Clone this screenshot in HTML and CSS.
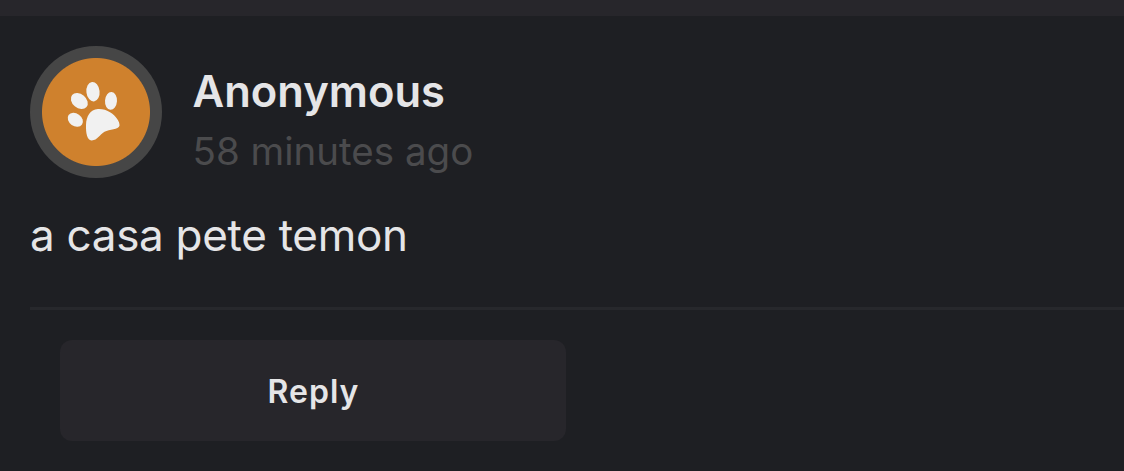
FILE: index.html
```html
<!DOCTYPE html>
<html lang="en">
<head>
  <meta charset="UTF-8">
  <meta name="viewport" content="width=device-width, initial-scale=1.0">
  <title>Comments</title>
  <link rel="stylesheet" href="styles.css">
</head>
<body>
  <div class="comment">
    <div class="comment-header">
      <div class="avatar">
        <svg class="paw" viewBox="0 0 70 70" fill="#f1f1f1">
          <ellipse cx="19.3" cy="25" rx="9.4" ry="7" transform="rotate(40 19.3 25)"/>
          <ellipse cx="33" cy="15.7" rx="6.6" ry="9.8" transform="rotate(-6 33 15.7)"/>
          <ellipse cx="51" cy="24.9" rx="6" ry="8.9" transform="rotate(4 51 24.9)"/>
          <ellipse cx="15.3" cy="43.8" rx="8.2" ry="6.3" transform="rotate(35 15.3 43.8)"/>
          <path d="M38 33.1C30 33.5 26.3 40.5 26 49C25.8 57 27 64.2 31.5 64.4C37.5 64.6 39.5 58.5 44.5 55.8C49.5 53.2 58.5 54 59.5 49.8C60 45.5 55.5 39.5 50.5 36.5C46.5 33.9 42 32.9 38 33.1Z"/>
        </svg>
      </div>
      <div class="meta">
        <div class="name">Anonymous</div>
        <div class="time">58 minutes ago</div>
      </div>
    </div>
    <p class="text">a casa pete temon</p>
    <div class="actions">
      <button class="reply">Reply</button>
    </div>
  </div>
</body>
</html>
```

FILE: styles.css
```css
body {
  margin: 0;
  background-color: #1e1f23;
  color: #e5e5e7;
  font-family: Inter, "Liberation Sans", sans-serif;
  overflow: hidden;
}
.comment {
  border-top: 16px solid #27262b;
  padding: 30px 0 0 30px;
}
.comment-header {
  display: flex;
  gap: 30.5px;
}
.avatar {
  display: flex;
  box-sizing: border-box;
  width: 132px;
  height: 132px;
  padding: 30px;
  border-radius: 50%;
  background: radial-gradient(circle, #cf812d 53.5px, #464646 54.5px);
}
.paw {
  width: 70px;
  height: 70px;
}
.meta {
  padding-top: 17px;
}
.name {
  font-size: 43.5px;
  font-weight: 600;
  line-height: 56px;
}
.time {
  color: #4b4b4d;
  font-size: 38.5px;
  line-height: 50px;
  margin-top: 7px;
}
.text {
  margin: 29px 0 44px;
  font-size: 44px;
  line-height: 56px;
  letter-spacing: -0.3px;
}
.actions {
  border-top: 3px solid #27282c;
  padding: 30px;
}
.reply {
  display: block;
  width: 506px;
  height: 101px;
  padding: 2px 0 0 1px;
  border: none;
  border-radius: 12px;
  background-color: #27262b;
  color: #e5e5e7;
  font-family: inherit;
  font-size: 32px;
  font-weight: 600;
  letter-spacing: 1px;
}
```
